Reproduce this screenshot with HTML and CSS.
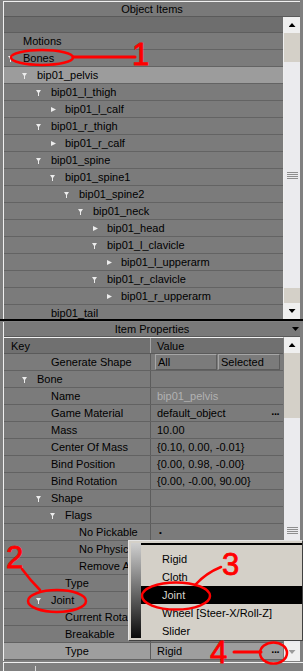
FILE: index.html
```html
<!DOCTYPE html>
<html>
<head>
<meta charset="utf-8">
<link rel="stylesheet" href="styles.css">
</head>
<body>
<div class="panel top">
  <div class="phead"><span></span><span>Object Items</span><span></span></div>
  <div class="pbody tree-body">
    <div class="list">
      <div class="search"></div>
      <div class="row l0"><i class="tw"></i><span>Motions</span></div>
      <div class="row l0"><i class="tw down"></i><span>Bones</span></div>
      <div class="row l1 sel"><i class="tw down"></i><span>bip01_pelvis</span></div>
      <div class="row l2"><i class="tw down"></i><span>bip01_l_thigh</span></div>
      <div class="row l3"><i class="tw right"></i><span>bip01_l_calf</span></div>
      <div class="row l2"><i class="tw down"></i><span>bip01_r_thigh</span></div>
      <div class="row l3"><i class="tw right"></i><span>bip01_r_calf</span></div>
      <div class="row l2"><i class="tw down"></i><span>bip01_spine</span></div>
      <div class="row l3"><i class="tw down"></i><span>bip01_spine1</span></div>
      <div class="row l4"><i class="tw down"></i><span>bip01_spine2</span></div>
      <div class="row l5"><i class="tw down"></i><span>bip01_neck</span></div>
      <div class="row l6"><i class="tw right"></i><span>bip01_head</span></div>
      <div class="row l6"><i class="tw down"></i><span>bip01_l_clavicle</span></div>
      <div class="row l7"><i class="tw right"></i><span>bip01_l_upperarm</span></div>
      <div class="row l6"><i class="tw down"></i><span>bip01_r_clavicle</span></div>
      <div class="row l7"><i class="tw right"></i><span>bip01_r_upperarm</span></div>
      <div class="row l2"><i class="tw"></i><span>bip01_tail</span></div>
    </div>
    <div class="vscroll s-top">
      <div class="sb-btn"><i class="arr up"></i></div>
      <div class="track"><div class="thumb"><i class="grip"></i></div></div>
      <div class="sb-btn"><i class="arr dn"></i></div>
    </div>
  </div>
</div>
<div class="sep"></div>
<div class="panel bottom">
  <div class="phead"><span></span><span>Item Properties</span><i class="arr dn hdr-arr"></i></div>
  <div class="pbody grid-body">
    <div class="grid">
      <div class="prow ghead"><div class="k hk">Key</div><div class="v">Value</div></div>
      <div class="prow"><div class="k p1"><i class="tw"></i>Generate Shape</div><div class="v btns"><span class="b">All</span><span class="b">Selected</span></div></div>
      <div class="prow"><div class="k p0"><i class="tw down"></i>Bone</div><div class="v"></div></div>
      <div class="prow"><div class="k p1"><i class="tw"></i>Name</div><div class="v dim">bip01_pelvis</div></div>
      <div class="prow"><div class="k p1"><i class="tw"></i>Game Material</div><div class="v sp"><span>default_object</span><b class="dots">...</b></div></div>
      <div class="prow"><div class="k p1"><i class="tw"></i>Mass</div><div class="v">10.00</div></div>
      <div class="prow"><div class="k p1"><i class="tw"></i>Center Of Mass</div><div class="v">{0.10, 0.00, -0.01}</div></div>
      <div class="prow"><div class="k p1"><i class="tw"></i>Bind Position</div><div class="v">{0.00, 0.98, -0.00}</div></div>
      <div class="prow"><div class="k p1"><i class="tw"></i>Bind Rotation</div><div class="v">{0.00, -0.00, 90.00}</div></div>
      <div class="prow"><div class="k p1"><i class="tw down"></i>Shape</div><div class="v"></div></div>
      <div class="prow"><div class="k p2"><i class="tw down"></i>Flags</div><div class="v"></div></div>
      <div class="prow"><div class="k p3"><i class="tw"></i>No Pickable</div><div class="v"><span class="dot">•</span></div></div>
      <div class="prow"><div class="k p3"><i class="tw"></i>No Physics</div><div class="v"></div></div>
      <div class="prow"><div class="k p3"><i class="tw"></i>Remove All</div><div class="v"></div></div>
      <div class="prow"><div class="k p2"><i class="tw"></i>Type</div><div class="v"></div></div>
      <div class="prow"><div class="k p1"><i class="tw down"></i>Joint</div><div class="v"></div></div>
      <div class="prow"><div class="k p2"><i class="tw"></i>Current Rotation</div><div class="v"></div></div>
      <div class="prow"><div class="k p2"><i class="tw"></i>Breakable</div><div class="v"></div></div>
      <div class="prow hl"><div class="k p2"><i class="tw"></i>Type</div><div class="v sp"><span>Rigid</span><b class="dots">...</b></div></div>
    </div>
    <div class="vscroll s-bot">
      <div class="sb-btn"><i class="arr up"></i></div>
      <div class="track"><div class="thumb"><i class="grip"></i></div></div>
      <div class="sb-btn"><i class="arr dn dis"></i></div>
    </div>
  </div>
</div>
<div class="foot"><div class="foot-in"></div></div>

<div class="popup">
  <div class="grad"></div>
  <div class="menu">
    <div class="mi">Rigid</div>
    <div class="mi">Cloth</div>
    <div class="mi on">Joint</div>
    <div class="mi">Wheel [Steer-X/Roll-Z]</div>
    <div class="mi">Slider</div>
  </div>
</div>

<svg class="ann" width="303" height="671" viewBox="0 0 303 671">
  <g fill="none" stroke="#ff0000" stroke-linecap="round">
    <ellipse cx="42" cy="57.5" rx="31" ry="7.5" stroke-width="2.5"/>
    <line x1="73" y1="57" x2="135" y2="57" stroke-width="3"/>
    <path d="M22 569 Q30 580 40 590" stroke-width="2.5"/>
    <ellipse cx="57" cy="601" rx="29" ry="11" stroke-width="2.5"/>
    <path d="M221 567 Q206 573 195 585" stroke-width="2.5"/>
    <ellipse cx="176" cy="596" rx="34" ry="13.5" stroke-width="2.5"/>
    <line x1="234" y1="652" x2="261" y2="652" stroke-width="3"/>
    <ellipse cx="273.5" cy="653" rx="13.5" ry="10.5" stroke-width="2.5"/>
  </g>
  <text class="num" x="132" y="65">1</text>
  <text class="num" x="6" y="568">2</text>
  <text class="num" x="222" y="575">3</text>
  <text class="num" x="210" y="663">4</text>
</svg>
</body>
</html>
```

FILE: styles.css
```css
* { box-sizing: border-box; }
body {
  margin: 0;
  width: 303px;
  height: 671px;
  overflow: hidden;
  position: relative;
  background: #808080;
  font-family: "Liberation Sans", Arial, sans-serif;
  font-size: 11px;
  color: #000;
}
i { display: block; font-style: normal; }

.panel {
  margin: 0 3px;
  border-left: 1px solid #f0f0f0;
}
.panel.top {
  margin-top: 1px;
  border-top: 1px solid #f0f0f0;
}
.panel.bottom { margin-top: 1px; }

.phead {
  height: 15px;
  line-height: 14px;
  background: #797979;
  border-bottom: 1px solid #5a5a5a;
  display: grid;
  grid-template-columns: 1fr auto 1fr;
  align-items: center;
  color: #000;
}
.hdr-arr { justify-self: end; margin-right: 1px; }

.pbody { display: flex; }
.tree-body { height: 302px; }
.grid-body { height: 324px; }

.list {
  flex: 1;
  border-right: 1px solid #f0f0f0;
  overflow: hidden;
  background: #7b7b7b;
}
.search {
  height: 16px;
  background: #6e6e6e;
  border-bottom: 1px solid #5e5e5e;
}
.row {
  height: 17px;
  border-bottom: 1px solid #636363;
  display: flex;
  align-items: center;
  white-space: nowrap;
  background: #7b7b7b;
}
.row.sel { background: #9c9c9c; }
.l0 { padding-left: 4px; }
.l1 { padding-left: 18px; }
.l2 { padding-left: 32px; }
.l3 { padding-left: 46px; }
.l4 { padding-left: 60px; }
.l5 { padding-left: 74px; }
.l6 { padding-left: 88px; }
.l7 { padding-left: 102px; }

.tw {
  width: 15px;
  height: 16px;
  flex: none;
  position: relative;
}
.tw.down::before {
  content: "";
  position: absolute;
  left: 0;
  top: 6px;
  width: 5px;
  height: 6px;
  background: #ececec;
  clip-path: polygon(0 0, 5px 0, 3px 3px, 3px 6px, 2px 6px, 2px 3px);
}
.tw.right::before {
  content: "";
  position: absolute;
  left: 1px;
  top: 6px;
  width: 5px;
  height: 5px;
  background: #ececec;
  clip-path: polygon(0 0, 5px 2.5px, 0 5px);
}

.vscroll {
  width: 16px;
  flex: none;
  display: flex;
  flex-direction: column;
}
.sb-btn {
  height: 16px;
  flex: none;
  background: #efefef;
  display: flex;
  align-items: center;
  justify-content: center;
}
.s-bot .sb-btn:last-child { height: 18px; }
.track {
  flex: 1;
  background: #d4d0c8;
  display: flex;
  flex-direction: column;
}
.s-top .track { padding: 29px 0 15px; }
.s-bot .track { padding: 65px 0 0; }
.thumb {
  flex: 1;
  background: #ebebee;
  display: flex;
  align-items: center;
  justify-content: center;
}
.grip {
  width: 11px;
  height: 7px;
  background: repeating-linear-gradient(#8e8e8e 0 1px, transparent 1px 2px);
}
.arr {
  width: 7px;
  height: 4px;
  background: #000;
}
.arr.up { clip-path: polygon(50% 0, 100% 100%, 0 100%); }
.arr.dn { clip-path: polygon(0 0, 100% 0, 50% 100%); }
.arr.dis { background: #9a9a9a; }

.sep {
  height: 2px;
  background: #000;
}

.grid {
  flex: 1;
  border-top: 1px solid #f0f0f0;
  border-right: 1px solid #7a7a7a;
  overflow: hidden;
  background: #7b7b7b;
}
.prow {
  display: flex;
  height: 17px;
  border-bottom: 1px solid #626262;
  background: #7b7b7b;
  white-space: nowrap;
}
.prow.ghead {
  height: 16px;
  background: #707070;
  border-bottom: 1px solid #5a5a5a;
}
.prow.hl { background: #9e9e9e; }
.k {
  width: 147px;
  flex: none;
  border-right: 1px solid #5c5c5c;
  display: flex;
  align-items: center;
  overflow: hidden;
}
.hk { padding-left: 7px; border-right-color: #a4a4a4; }
.p0 { padding-left: 18px; }
.p1 { padding-left: 32px; }
.p2 { padding-left: 46px; }
.p3 { padding-left: 60px; }
.v {
  flex: 1;
  padding-left: 6px;
  display: flex;
  align-items: center;
  overflow: hidden;
}
.v.sp { justify-content: space-between; padding-right: 4px; }
.v.dim { color: #b2b2b2; }
.dots { font-weight: bold; letter-spacing: -0.5px; position: relative; top: -2px; }
.dot { font-size: 8px; padding-left: 2px; }
.v.btns { padding-left: 4px; gap: 1px; }
.b {
  width: 62px;
  height: 16px;
  line-height: 14px;
  padding-left: 2px;
  border: 1px solid;
  border-color: #a6a6a6 #5c5c5c #5c5c5c #a6a6a6;
}

.foot {
  margin: 1px 0 0 3px;
  border-top: 1px solid #f0f0f0;
  border-left: 1px solid #f0f0f0;
  height: 9px;
  padding-top: 3px;
}
.foot-in {
  margin-left: 31px;
  height: 6px;
  border-left: 1px solid #d8d8d8;
}

.popup {
  position: absolute;
  left: 128px;
  top: 540px;
  width: 175px;
  height: 101px;
  border: 1px solid;
  border-color: #e4e4e4 #404040 #404040 #e4e4e4;
  background: #d4d0c8;
  display: flex;
}
.grad {
  width: 10px;
  margin: 2px 0 2px 2px;
  background: linear-gradient(#cfcfcf, #0a0a0a);
}
.menu {
  flex: 1;
  margin-top: 2px;
  border-top: 2px solid #000;
  padding-top: 5px;
}
.mi {
  height: 18px;
  line-height: 18px;
  padding-left: 21px;
  color: #000;
}
.mi.on { background: #000; color: #d8d4cc; }

.ann {
  position: absolute;
  left: 0;
  top: 0;
  pointer-events: none;
}
.num {
  font-family: "Liberation Sans", Arial, sans-serif;
  font-size: 31px;
  fill: #ff0000;
  stroke: #ff0000;
  stroke-width: 0.8px;
}
```
